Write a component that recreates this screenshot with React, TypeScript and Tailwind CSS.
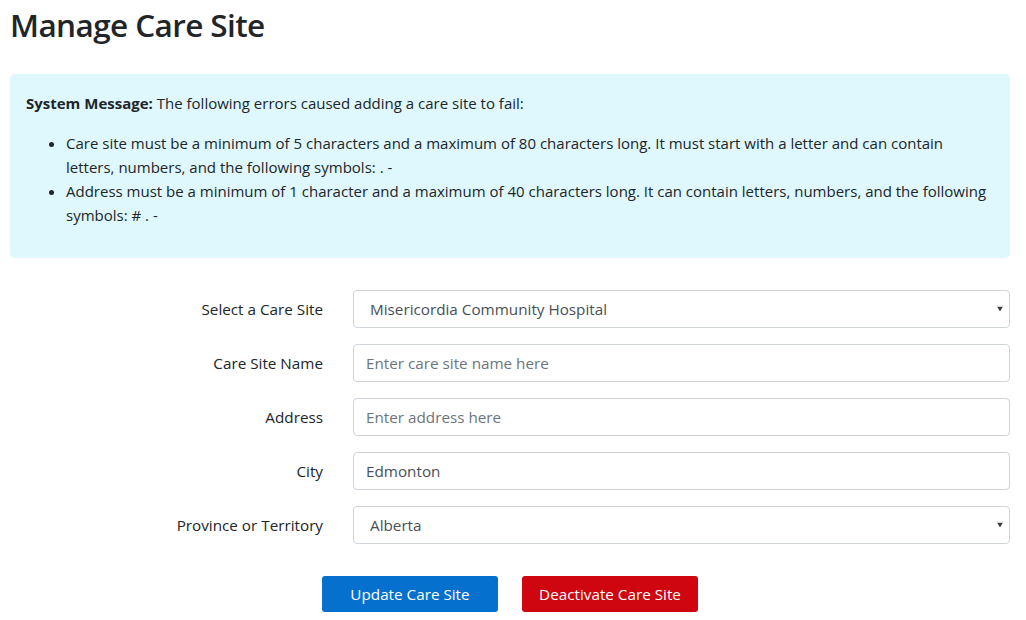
import React, { useState } from 'react';

const PROVINCES = [
  'Alberta',
  'British Columbia',
  'Manitoba',
  'New Brunswick',
  'Newfoundland and Labrador',
  'Northwest Territories',
  'Nova Scotia',
  'Nunavut',
  'Ontario',
  'Prince Edward Island',
  'Quebec',
  'Saskatchewan',
  'Yukon',
];

const SITES = [
  'Misericordia Community Hospital',
  'Royal Alexandra Hospital',
  'Grey Nuns Community Hospital',
];

const inputClass =
  'w-full h-[38px] px-3 border border-[#ced4da] rounded-[4px] bg-white text-[15.25px] text-[#495057] placeholder:text-[#6c757d] focus:outline-none';

const Arrow: React.FC = () => (
  <svg
    className="absolute right-[7px] top-1/2 -translate-y-1/2 pointer-events-none"
    width="6"
    height="5"
    viewBox="0 0 6 5">
    <path d="M0 0h6L3 5z" fill="#3c4046" />
  </svg>
);

const Row: React.FC<{ label: string; children: React.ReactNode }> = ({
  label,
  children,
}) => (
  <div className="flex items-center">
    <label className="w-[343px] pr-[30px] text-right text-[15.25px] text-[#212529]">
      {label}
    </label>
    <div className="flex-1 relative">{children}</div>
  </div>
);

const App: React.FC = () => {
  const [site, setSite] = useState(SITES[0]);
  const [name, setName] = useState('');
  const [address, setAddress] = useState('');
  const [city, setCity] = useState('Edmonton');
  const [province, setProvince] = useState('Alberta');

  return (
    <div
      className="min-h-screen bg-white text-[15px] leading-6 text-[#212529]"
      style={{ fontFamily: '"Open Sans", sans-serif' }}>
      <div className="w-[1000px] ml-[10px]">
        <h1 className="text-[31.5px] leading-[48px] font-semibold tracking-[-0.6px] text-[#212529] pt-[1px]">
          Manage Care Site
        </h1>

        <div className="mt-[25px] bg-[#dff8fd] rounded-[5px] px-4 pt-[17px] pb-[31px]">
          <p>
            <b className="font-bold">System Message:</b> The following errors
            caused adding a care site to fail:
          </p>
          <ul className="list-disc pl-10 mt-4">
            <li>
              Care site must be a minimum of 5 characters and a maximum of 80
              characters long. It must start with a letter and can contain
              letters, numbers, and the following symbols: . -
            </li>
            <li>
              Address must be a minimum of 1 character and a maximum of 40
              characters long. It can contain letters, numbers, and the
              following symbols: # . -
            </li>
          </ul>
        </div>

        <form
          className="mt-[32px] flex flex-col gap-4"
          onSubmit={(e) => e.preventDefault()}>
          <Row label="Select a Care Site">
            <select
              value={site}
              onChange={(e) => setSite(e.target.value)}
              className={`${inputClass} appearance-none pl-4`}>
              {SITES.map((s) => (
                <option key={s}>{s}</option>
              ))}
            </select>
            <Arrow />
          </Row>
          <Row label="Care Site Name">
            <input
              type="text"
              value={name}
              onChange={(e) => setName(e.target.value)}
              placeholder="Enter care site name here"
              className={inputClass}
            />
          </Row>
          <Row label="Address">
            <input
              type="text"
              value={address}
              onChange={(e) => setAddress(e.target.value)}
              placeholder="Enter address here"
              className={inputClass}
            />
          </Row>
          <Row label="City">
            <input
              type="text"
              value={city}
              onChange={(e) => setCity(e.target.value)}
              className={inputClass}
            />
          </Row>
          <Row label="Province or Territory">
            <select
              value={province}
              onChange={(e) => setProvince(e.target.value)}
              className={`${inputClass} appearance-none pl-4`}>
              {PROVINCES.map((p) => (
                <option key={p}>{p}</option>
              ))}
            </select>
            <Arrow />
          </Row>

          <div className="flex justify-center gap-6 mt-4">
            <button
              type="submit"
              className="w-[176px] h-[36px] bg-[#0670cf] text-white text-[15.25px] rounded-[3px]">
              Update Care Site
            </button>
            <button
              type="button"
              className="w-[176px] h-[36px] bg-[#cf0510] text-white text-[15.25px] rounded-[3px]">
              Deactivate Care Site
            </button>
          </div>
        </form>
      </div>
    </div>
  );
};

export default App;
